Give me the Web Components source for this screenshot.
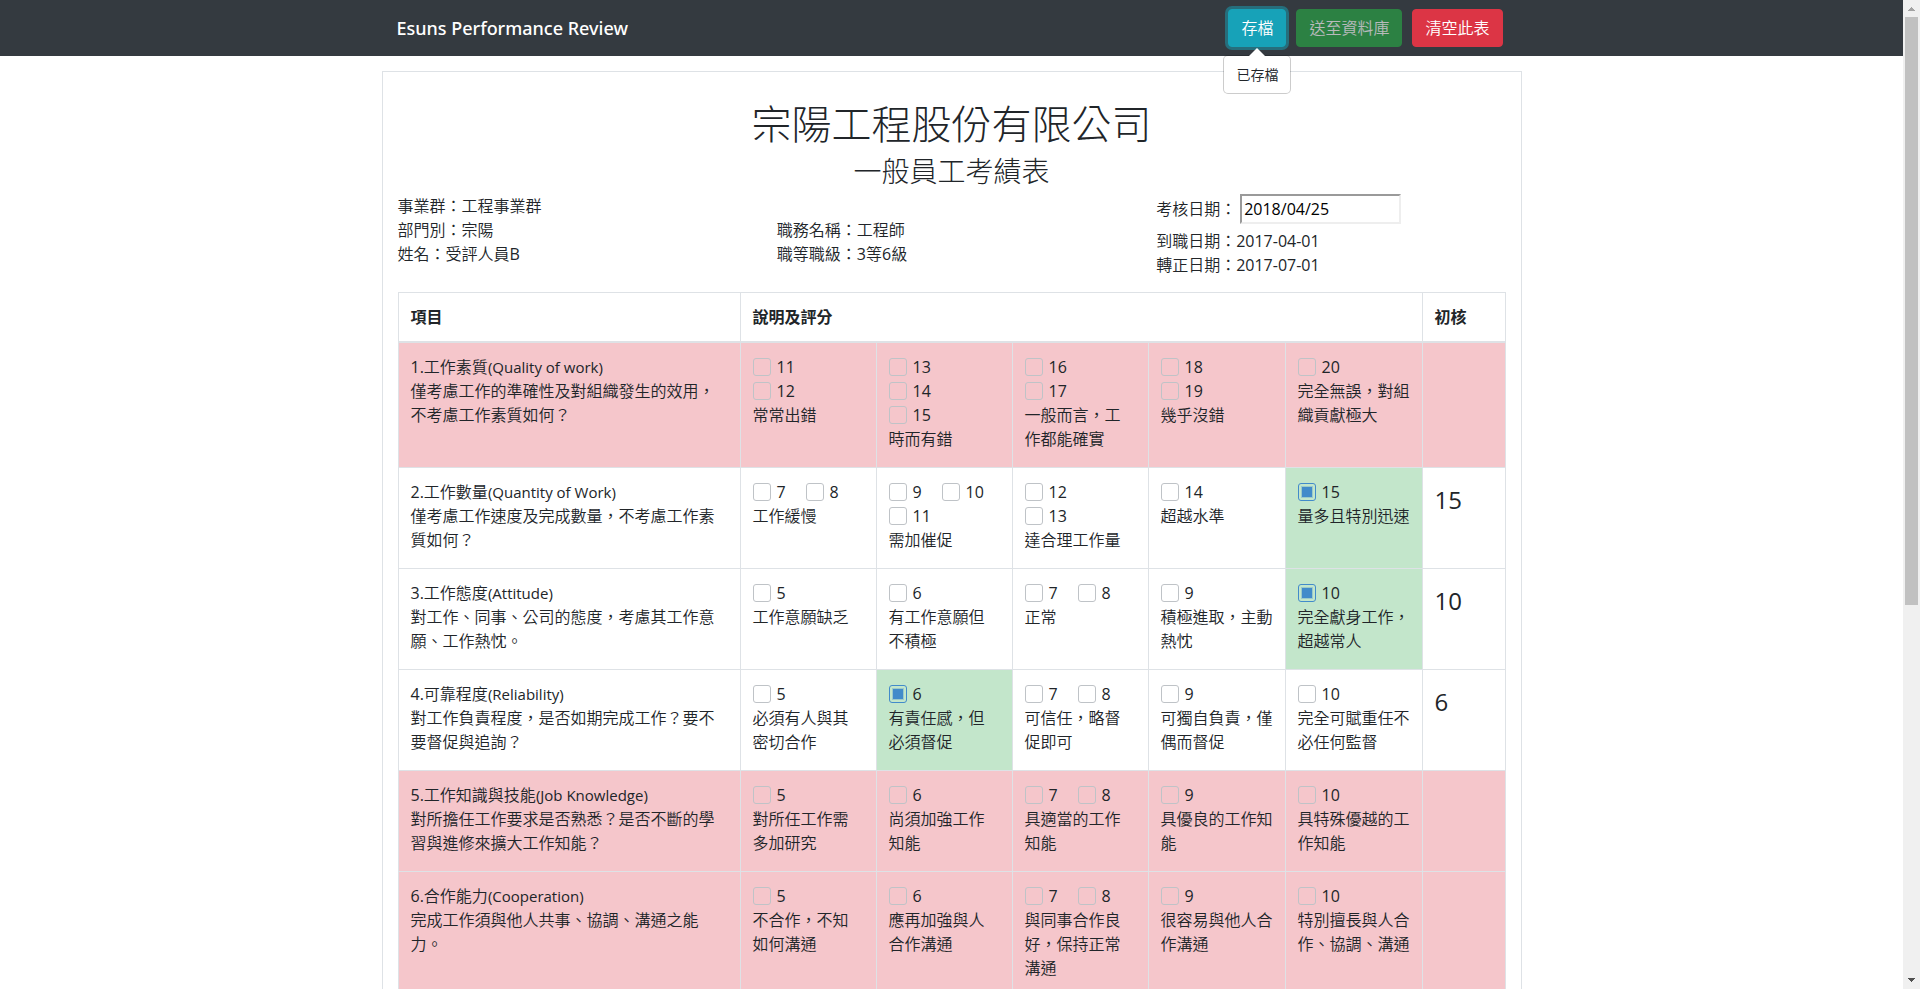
<!DOCTYPE html>
<html lang="zh-Hant">
<head>
<meta charset="utf-8">
<title>Esuns Performance Review</title>
<style>
  body {
    margin: 0;
    color: #212529;
    background: #fff;
    font: 350 16px/24px "Open Sans", "Noto Sans CJK TC", sans-serif;
  }
</style>
</head>
<body>
<review-app>
  <app-navbar slot="navbar" brand="Esuns Performance Review">
    <save-control message="已存檔">存檔</save-control>
    <nav-button kind="success" disabled>送至資料庫</nav-button>
    <nav-button kind="danger">清空此表</nav-button>
  </app-navbar>
  <review-card>
    <span slot="company">宗陽工程股份有限公司</span>
    <span slot="form">一般員工考績表</span>
    <employee-info slot="info"></employee-info>
    <score-table></score-table>
  </review-card>
</review-app>

<script>
const mount = (el, html) => {
  el.attachShadow({ mode: 'open' }).innerHTML = html;
  return el.shadowRoot;
};

customElements.define('review-app', class extends HTMLElement {
  connectedCallback() {
    mount(this, `
      <style>
        :host { display: flex; height: 100vh; overflow: hidden; }
        .page { flex: 1; min-width: 0; overflow: hidden; }
        main { max-width: 1140px; margin: 15px auto; }
      </style>
      <div class="page">
        <slot name="navbar"></slot>
        <main><slot></slot></main>
      </div>
      <scroll-rail></scroll-rail>`);
  }
});

customElements.define('scroll-rail', class extends HTMLElement {
  connectedCallback() {
    mount(this, `
      <style>
        :host { display: flex; flex-direction: column; width: 17px; background: #f0f0f0; }
        svg { display: block; width: 17px; height: 17px; flex: none; }
        .track { flex: 1; padding: 0 2px; }
        .thumb { height: 61.6%; background: #c1c1c1; }
      </style>
      <svg viewBox="0 0 17 17" aria-hidden="true"><path d="M5 11h7v-1h-1v-1h-1v-1h-1v-1h-1v1h-1v1h-1v1h-1z" fill="#a3a3a3"/></svg>
      <div class="track"><div class="thumb"></div></div>
      <svg viewBox="0 0 17 17" aria-hidden="true"><path d="M5 6h7v1h-1v1h-1v1h-1v1h-1v-1h-1v-1h-1v-1h-1z" fill="#505050"/></svg>`);
  }
});

customElements.define('app-navbar', class extends HTMLElement {
  connectedCallback() {
    mount(this, `
      <style>
        :host { display: block; background: #343a40; }
        nav {
          display: flex; align-items: center; justify-content: space-between;
          box-sizing: border-box; max-width: 1140px; height: 56px;
          margin: 0 auto; padding: 0 19px 0 15px;
        }
        a { color: #fff; font: 500 18px/30px "Noto Sans", sans-serif; text-decoration: none; }
        .actions { display: flex; gap: 10px; }
      </style>
      <nav>
        <a href="#">${this.getAttribute('brand')}</a>
        <div class="actions"><slot></slot></div>
      </nav>`);
  }
});

const buttonStyle = `
  button {
    display: block; height: 38px; padding: 0 12px; border: 1px solid var(--tone);
    border-radius: 4px; background: var(--tone); color: #fff;
    font: inherit; white-space: nowrap;
  }
  button:disabled { opacity: .65; }`;

customElements.define('nav-button', class extends HTMLElement {
  connectedCallback() {
    const tone = { success: '#28a745', danger: '#dc3545' }[this.getAttribute('kind')];
    mount(this, `
      <style>:host { display: block; --tone: ${tone}; } ${buttonStyle}</style>
      <button type="button" ${this.hasAttribute('disabled') ? 'disabled' : ''}><slot></slot></button>`);
  }
});

/* Save button with its focus ring and the popover below it */
customElements.define('save-control', class extends HTMLElement {
  connectedCallback() {
    mount(this, `
      <style>
        :host { display: block; position: relative; --tone: #17a2b8; }
        ${buttonStyle}
        button { box-shadow: 0 0 0 3px rgba(23, 162, 184, .5); }
        .popover {
          position: absolute; top: 46px; left: 50%; transform: translateX(-50%);
          padding: 8px 12px; border: 1px solid rgba(0, 0, 0, .2); border-radius: 5px;
          background: #fff; background-clip: padding-box;
          font-size: 14px; line-height: 21px; white-space: nowrap; z-index: 1;
        }
        .popover::before {
          content: ""; position: absolute; top: -8px; left: 50%; margin-left: -8px;
          border: solid transparent; border-width: 0 8px 8px; border-bottom-color: #fff;
        }
      </style>
      <button type="button" aria-describedby="note"><slot></slot></button>
      <div class="popover" id="note" role="tooltip">${this.getAttribute('message')}</div>`);
  }
});

customElements.define('review-card', class extends HTMLElement {
  connectedCallback() {
    mount(this, `
      <style>
        :host { display: block; padding: 28px 15px 15px; border: 1px solid #dee2e6; }
        h1, h2 { margin: 0 0 6px; font-weight: 300; text-align: center; }
        h1 { font-size: 40px; line-height: 48px; }
        h2 { font-size: 28px; line-height: 34px; }
        ::slotted(employee-info) { margin-bottom: 15px; }
      </style>
      <h1><slot name="company"></slot></h1>
      <h2><slot name="form"></slot></h2>
      <slot name="info"></slot>
      <slot></slot>`);
  }
});

customElements.define('employee-info', class extends HTMLElement {
  connectedCallback() {
    mount(this, `
      <style>
        :host { display: grid; grid-template-columns: repeat(3, 1fr); column-gap: 30px; }
        .middle { padding-top: 24px; }
        b { font-weight: 400; }
        .date { display: flex; align-items: center; gap: 4px; margin-bottom: 5px; }
        input {
          box-sizing: border-box; width: 161px; height: 30px; padding: 1px 2px;
          border: 2px solid; border-color: #9a9a9a #eee #eee #9a9a9a;
          background: #fff; color: #000; font: inherit; font-weight: 400;
        }
      </style>
      <div>
        <div>事業群：工程事業群</div>
        <div>部門別：宗陽</div>
        <div>姓名：受評人員<b>B</b></div>
      </div>
      <div class="middle">
        <div>職務名稱：工程師</div>
        <div>職等職級：<b>3</b>等<b>6</b>級</div>
      </div>
      <div>
        <div class="date"><label for="date">考核日期：</label><input id="date" type="text" value="2018/04/25"></div>
        <div>到職日期：<b>2017-04-01</b></div>
        <div>轉正日期：<b>2017-07-01</b></div>
      </div>`);
  }
});

/* Each item: title, English name, description, five choices (score lines + text), chosen score */
const ITEMS = [
  ['1.', '工作素質', 'Quality of work', '僅考慮工作的準確性及對組織發生的效用，不考慮工作素質如何？', [
    [[[11], [12]], '常常出錯'], [[[13], [14], [15]], '時而有錯'], [[[16], [17]], '一般而言，工作都能確實'],
    [[[18], [19]], '幾乎沒錯'], [[[20]], '完全無誤，對組織貢獻極大']], null],
  ['2.', '工作數量', 'Quantity of Work', '僅考慮工作速度及完成數量，不考慮工作素質如何？', [
    [[[7, 8]], '工作緩慢'], [[[9, 10], [11]], '需加催促'], [[[12], [13]], '達合理工作量'],
    [[[14]], '超越水準'], [[[15]], '量多且特別迅速']], 15],
  ['3.', '工作態度', 'Attitude', '對工作、同事、公司的態度，考慮其工作意願、工作熱忱。', [
    [[[5]], '工作意願缺乏'], [[[6]], '有工作意願但不積極'], [[[7, 8]], '正常'],
    [[[9]], '積極進取，主動熱忱'], [[[10]], '完全獻身工作，超越常人']], 10],
  ['4.', '可靠程度', 'Reliability', '對工作負責程度，是否如期完成工作？要不要督促與追詢？', [
    [[[5]], '必須有人與其密切合作'], [[[6]], '有責任感，但必須督促'], [[[7, 8]], '可信任，略督促即可'],
    [[[9]], '可獨自負責，僅偶而督促'], [[[10]], '完全可賦重任不必任何監督']], 6],
  ['5.', '工作知識與技能', 'Job Knowledge', '對所擔任工作要求是否熟悉？是否不斷的學習與進修來擴大工作知能？', [
    [[[5]], '對所任工作需多加研究'], [[[6]], '尚須加強工作知能'], [[[7, 8]], '具適當的工作知能'],
    [[[9]], '具優良的工作知能'], [[[10]], '具特殊優越的工作知能']], null],
  ['6.', '合作能力', 'Cooperation', '完成工作須與他人共事、協調、溝通之能力。', [
    [[[5]], '不合作，不知如何溝通'], [[[6]], '應再加強與人合作溝通'], [[[7, 8]], '與同事合作良好，保持正常溝通'],
    [[[9]], '很容易與他人合作溝通'], [[[10]], '特別擅長與人合作、協調、溝通']], null]
];

customElements.define('score-table', class extends HTMLElement {
  connectedCallback() {
    const option = (row, score, chosen) => `
      <label for="s${row}-${score}"><input type="checkbox" id="s${row}-${score}" ${score === chosen ? 'checked' : ''}>${score}</label>`;
    const choice = (row, [lines, text], chosen) => `
      <td class="${lines.flat().includes(chosen) ? 'chosen' : ''}">
        ${lines.map(l => `<div class="options">${l.map(s => option(row, s, chosen)).join('')}</div>`).join('')}
        <div>${text}</div>
      </td>`;
    const rows = ITEMS.map(([no, name, en, desc, choices, chosen], i) => `
      <tr class="${chosen ? '' : 'missing'}">
        <td><div><span class="no">${no}</span>${name}<span class="en">(${en})</span></div><div>${desc}</div></td>
        ${choices.map(c => choice(i + 1, c, chosen)).join('')}
        <td class="score">${chosen ?? ''}</td>
      </tr>`).join('');
    mount(this, `
      <style>
        :host { display: block; }
        table { width: 100%; table-layout: fixed; border-collapse: collapse; }
        th, td { padding: 12px 12px 16px; border: 1px solid #dee2e6; text-align: left; vertical-align: top; }
        th { padding-bottom: 12px; border-bottom-width: 2px; font-weight: 700; }
        .item { width: 342px; }
        .narrow { width: 136px; }
        .wide { width: 137px; }
        .missing { background: #f5c6cb; }
        .chosen { background: #c3e6cb; }
        .no { font-weight: 400; }
        .en { font-size: 15px; font-weight: 400; }
        .options { display: flex; height: 24px; }
        label { display: flex; align-items: center; gap: 6px; min-width: 53px; font-weight: 400; }
        input {
          appearance: none; box-sizing: border-box; width: 18px; height: 18px; margin: 0;
          padding: 3px; border: 1px solid #bfc3c7; border-radius: 3px;
          background: #fff; flex: none;
        }
        .missing input { background: none; }
        input:checked { border-color: #428bca; background: none; }
        input:checked::after {
          content: ""; display: block; width: 10px; height: 10px; background: #428bca;
          box-shadow: 0 0 0 1px rgba(66, 139, 202, .3);
        }
        .score { font-size: 24px; line-height: 40px; font-weight: 400; }
      </style>
      <table>
        <colgroup>
          <col class="item"><col class="narrow"><col class="narrow"><col class="narrow"><col class="wide"><col class="wide"><col>
        </colgroup>
        <thead><tr><th scope="col">項目</th><th scope="colgroup" colspan="5">說明及評分</th><th scope="col">初核</th></tr></thead>
        <tbody>${rows}</tbody>
      </table>`);
  }
});
</script>
</body>
</html>
